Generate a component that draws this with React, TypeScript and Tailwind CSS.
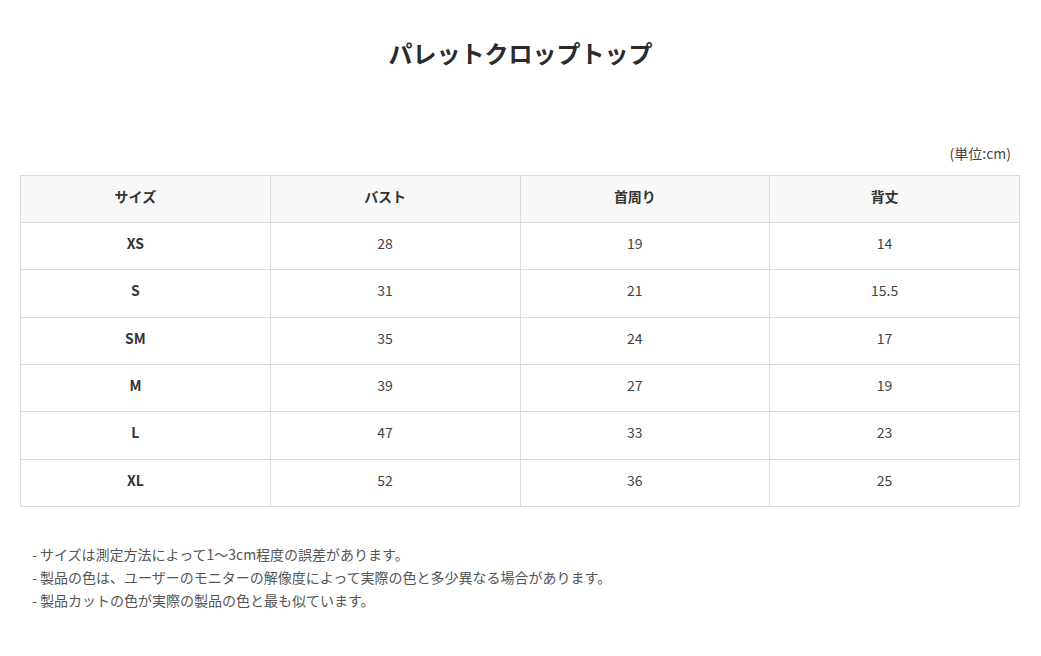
const rows = [
  ["XS", "28", "19", "14"],
  ["S", "31", "21", "15.5"],
  ["SM", "35", "24", "17"],
  ["M", "39", "27", "19"],
  ["L", "47", "33", "23"],
  ["XL", "52", "36", "25"],
];

const headers = ["サイズ", "バスト", "首周り", "背丈"];

const notes = [
  "- サイズは測定方法によって1〜3cm程度の誤差があります。",
  "- 製品の色は、ユーザーのモニターの解像度によって実際の色と多少異なる場合があります。",
  "- 製品カットの色が実際の製品の色と最も似ています。",
];

export default function App() {
  return (
    <div
      className="w-[1041px] min-h-[656px] bg-white text-[#333] pt-[36px]"
      style={{ fontFamily: '"Noto Sans CJK JP", "Noto Sans", sans-serif' }}
    >
      <h1 className="text-center text-[24px] font-bold leading-[34px] text-[#2b2b2b]">
        パレットクロップトップ
      </h1>

      <div className="pl-[20px] mt-[73px]">
        <div className="w-[1000px]">
          <p className="text-right text-[14px] leading-[20px] pr-[9px] mb-[12px] text-[#444]">
            (単位:cm)
          </p>
          <table className="w-full border-collapse table-fixed text-[14px]">
            <thead>
              <tr className="bg-[#f8f8f8] h-[47px]">
                {headers.map((h) => (
                  <th
                    key={h}
                    className="pr-[20px] pb-[6px] border border-[#dcdcdc] font-bold text-center text-[#333]"
                  >
                    {h}
                  </th>
                ))}
              </tr>
            </thead>
            <tbody>
              {rows.map((r, ri) => (
                <tr key={r[0]} className={ri % 3 === 1 ? "h-[48px]" : "h-[47px]"}>
                  {r.map((c, i) => (
                    <td
                      key={i}
                      className={`pr-[20px] pb-[6px] border border-[#dcdcdc] text-center ${
                        i === 0 ? "font-bold text-[#333]" : "text-[#444]"
                      }`}
                    >
                      {c}
                    </td>
                  ))}
                </tr>
              ))}
            </tbody>
          </table>

          <div className="mt-[36px] pl-[12px] text-[14px] leading-[23px] text-[#555]">
            {notes.map((n) => (
              <p key={n}>{n}</p>
            ))}
          </div>
        </div>
      </div>
    </div>
  );
}
